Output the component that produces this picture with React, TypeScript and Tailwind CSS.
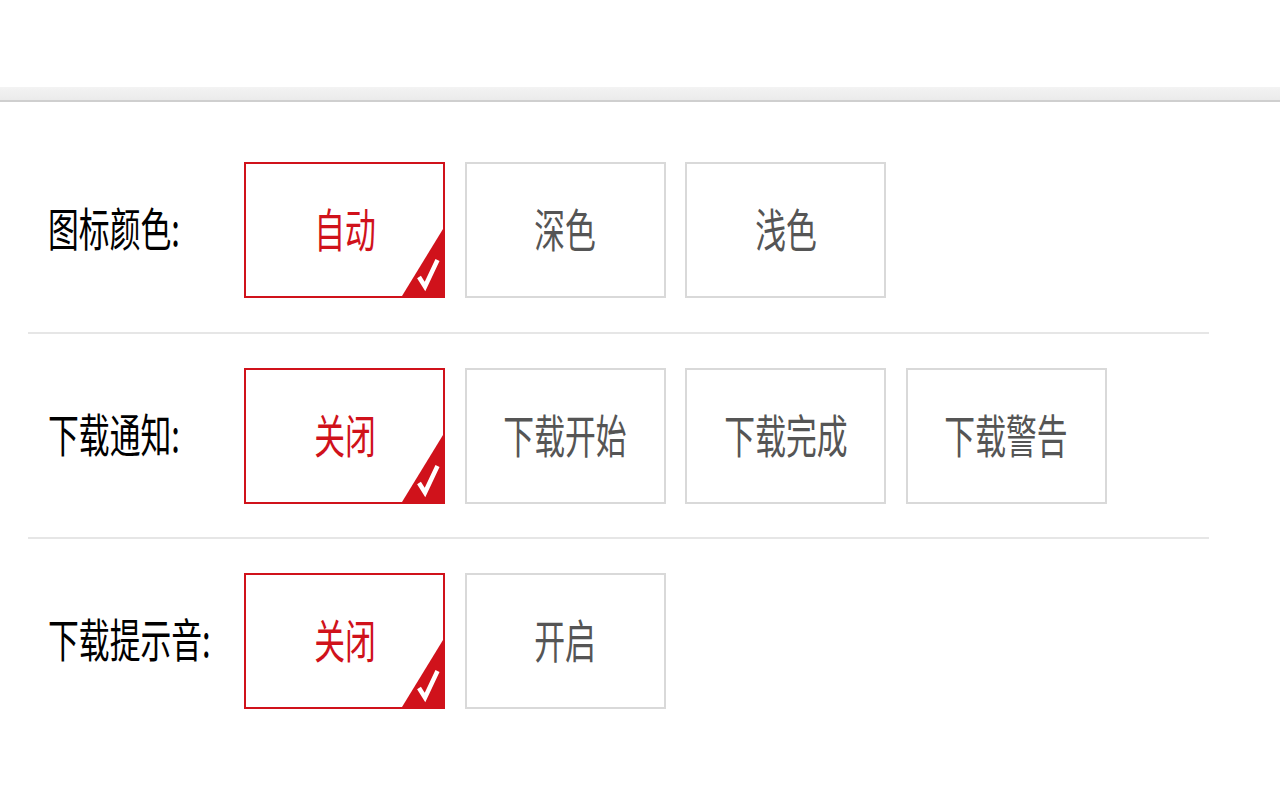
import React from "react";

const FONT = '"Noto Sans CJK SC", "Noto Sans", sans-serif';

function Opt({ text, selected }: { text: string; selected?: boolean }) {
  return (
    <div
      className={
        "relative w-[201px] h-[136px] border-2 flex items-center justify-center pb-[6px] bg-white " +
        (selected ? "border-[#d0121b]" : "border-[#d9d9d9]")
      }
    >
      <span
        className={
          "inline-block text-[46px] leading-none scale-x-[0.67] whitespace-nowrap " +
          (selected ? "text-[#d0121b]" : "text-[#555555]")
        }
      >
        {text}
      </span>
      {selected && (
        <svg
          className="absolute right-0 bottom-0"
          width="41"
          height="67"
          viewBox="0 0 41 67"
        >
          <polygon points="41,0 41,67 0,67" fill="#d0121b" />
          <path
            d="M17 48 L23 57.5 L35.5 31"
            fill="none"
            stroke="#ffffff"
            strokeWidth="4.5"
            strokeLinecap="butt"
            strokeLinejoin="miter"
          />
        </svg>
      )}
    </div>
  );
}

function Row({ label, opts }: { label: string; opts: string[] }) {
  return (
    <div className="flex items-center h-[136px]">
      <div className="w-[216px] pl-[20px] pb-[8px] flex items-center">
        <span className="inline-block origin-left text-[46px] leading-none scale-x-[0.67] whitespace-nowrap text-black">
          {label}
        </span>
      </div>
      <div className="flex gap-[19.5px]">
        {opts.map((o, i) => (
          <Opt key={o} text={o} selected={i === 0} />
        ))}
      </div>
    </div>
  );
}

export default function App() {
  return (
    <div className="w-[1280px] h-[800px] bg-white overflow-hidden" style={{ fontFamily: FONT }}>
      <div className="h-[87px] bg-white" />
      <div className="h-[13px] bg-gradient-to-b from-[#f3f3f3] to-[#ebebeb]" />
      <div className="h-[2px] bg-[#cfcfcf]" />
      <div className="pl-[28px] pt-[60px]">
        <div className="w-[1181px]">
          <Row label="图标颜色:" opts={["自动", "深色", "浅色"]} />
          <div className="h-[2px] bg-[#e6e6e6] mt-[34px] mb-[34px]" />
          <Row label="下载通知:" opts={["关闭", "下载开始", "下载完成", "下载警告"]} />
          <div className="h-[2px] bg-[#e6e6e6] mt-[33px] mb-[34px]" />
          <Row label="下载提示音:" opts={["关闭", "开启"]} />
        </div>
      </div>
    </div>
  );
}
